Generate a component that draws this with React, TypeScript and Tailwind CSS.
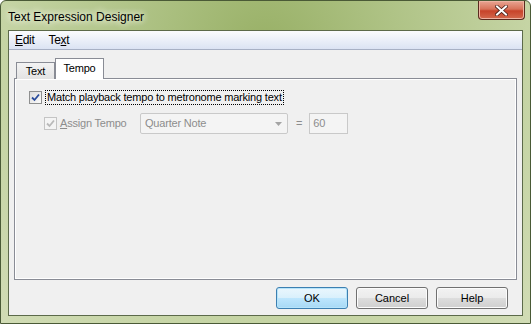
import React from "react";

const font = "font-['Liberation_Sans',Arial,sans-serif]";

function Check({ disabled }: { disabled?: boolean }) {
  return (
    <span
      className={`flex h-[13px] w-[13px] shrink-0 items-center justify-center border ${
        disabled ? "border-[#c4c4c4] bg-[#f4f4f4]" : "border-[#8e8f8f] bg-gradient-to-br from-[#dcdcdc] to-[#fbfbfb]"
      }`}
    >
      <svg width="9" height="9" viewBox="0 0 9 9">
        <path
          d="M1 4.5 L3.5 7 L8 1.5"
          fill="none"
          stroke={disabled ? "#b9b9b9" : "#2a4c9c"}
          strokeWidth="1.8"
        />
      </svg>
    </span>
  );
}

function Button({ label, primary }: { label: string; primary?: boolean }) {
  return (
    <div
      className={`flex h-[22px] w-[72px] items-center justify-center rounded-[3px] border text-[11px] text-black ${
        primary
          ? "border-[#3c7fb1] bg-[linear-gradient(#eaf6fd_0%,#d9f0fc_50%,#bee6fd_50%,#a7d9f5_100%)] shadow-[inset_0_0_0_1px_#b6e4fa]"
          : "border-[#707070] bg-[linear-gradient(#f2f2f2_0%,#ebebeb_50%,#dddddd_50%,#cfcfcf_100%)] shadow-[inset_0_0_0_1px_#fcfcfc]"
      }`}
    >
      {label}
    </div>
  );
}

export default function App() {
  return (
    <div
      className={`${font} flex h-[324px] w-[531px] flex-col overflow-hidden rounded-t-[6px] border border-[#4a5a36] bg-[radial-gradient(ellipse_at_50%_15%,#98b066_0%,#afc386_35%,#c5d4a4_70%,#d1dcb5_100%)]`}
    >
      {/* title bar */}
      <div className="flex h-[29px] shrink-0 items-start justify-between pl-[7px] pr-[5px]">
        <span className="mt-[7px] text-[12px] text-black [text-shadow:0_0_6px_#f4f7ea,0_0_8px_#f4f7ea]">
          Text Expression Designer
        </span>
        <div className="flex h-[19px] w-[47px] items-center justify-center rounded-b-[4px] border border-t-0 border-[#5a2a1e] bg-[linear-gradient(#e9a593_0%,#d8735a_45%,#c7432a_55%,#d3694d_100%)] shadow-[inset_0_0_0_1px_#eeb3a2]">
          <svg width="13" height="11" viewBox="0 0 13 11">
            <path d="M2 1.5 L11 9.5 M11 1.5 L2 9.5" stroke="#4a2018" strokeWidth="3.6" strokeLinecap="square" />
            <path d="M2 1.5 L11 9.5 M11 1.5 L2 9.5" stroke="#ffffff" strokeWidth="2" strokeLinecap="square" />
          </svg>
        </div>
      </div>

      {/* client */}
      <div className="mx-[7px] mb-[7px] flex flex-1 flex-col border border-[#5c6a4a] bg-[#f0f0f0]">
        <div className="flex h-[19px] shrink-0 items-center gap-[14px] border-b border-[#a7b0c4] bg-[linear-gradient(#fbfcfe,#dbe3f3)] pl-[6px] text-[12px] tracking-[-0.3px] text-black">
          <span>
            <span className="underline">E</span>dit
          </span>
          <span>
            Te<span className="underline">x</span>t
          </span>
        </div>

        <div className="flex flex-1 flex-col px-[5px] pt-[7px]">
          {/* tabs */}
          <div className="relative z-10 flex h-[21px] items-end pl-[2px] text-[11px] tracking-[-0.2px]">
            <div className="mb-[-1px] flex h-[17px] w-[39px] items-center justify-center border border-b-0 border-[#898c95] bg-[linear-gradient(#f3f3f3,#e3e3e3)] text-black">
              Text
            </div>
            <div className="mb-[-1px] flex h-[21px] w-[49px] items-center justify-center border border-b-0 border-[#898c95] bg-white pb-[2px] text-black">
              Tempo
            </div>
          </div>

          {/* panel */}
          <div className="flex h-[202px] flex-col border border-[#898c95] pl-[14px] pt-[11px] text-[11px] tracking-[-0.2px] shadow-[inset_0_0_0_1px_#ffffff]">
            <div className="flex items-center gap-[3px]">
              <Check />
              <span className="border border-dotted border-black px-[1px] leading-[13px] text-black">
                Match playback tempo to metronome marking text
              </span>
            </div>
            <div className="mt-[8px] flex items-center pl-[15px]">
              <Check disabled />
              <span className="ml-[3px] w-[80px] text-[#8d8d8d]">
                <span className="underline">A</span>ssign Tempo
              </span>
              <div className="flex h-[21px] w-[148px] items-center justify-between rounded-[2px] border border-[#c9c9c9] bg-[#f4f4f4] pl-[4px] pr-[5px] text-[#8d8d8d]">
                <span>Quarter Note</span>
                <svg width="7" height="4" viewBox="0 0 7 4">
                  <path d="M0 0 H7 L3.5 4 Z" fill="#a4a4a4" />
                </svg>
              </div>
              <span className="ml-[8px] mr-[7px] text-[#8d8d8d]">=</span>
              <div className="flex h-[21px] w-[39px] items-center border border-[#c9c9c9] bg-[#f4f4f4] pl-[3px] text-[#8d8d8d]">
                60
              </div>
            </div>
          </div>

          {/* buttons */}
          <div className="mt-[7px] flex justify-end gap-[8px] pr-[9px]">
            <Button label="OK" primary />
            <Button label="Cancel" />
            <Button label="Help" />
          </div>
        </div>
      </div>
    </div>
  );
}
